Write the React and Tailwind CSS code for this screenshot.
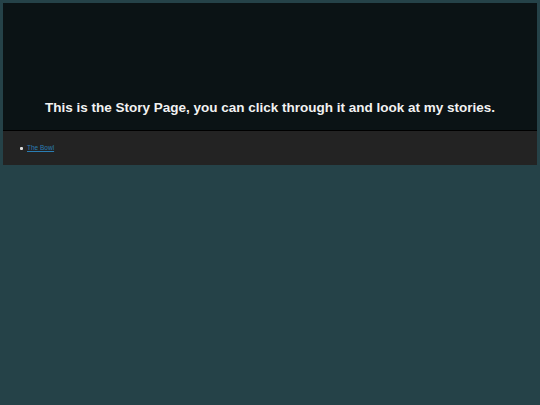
export default function App() {
  return (
    <div className="min-h-[405px] w-full bg-[#254248] p-[3px]" style={{ fontFamily: '"Liberation Sans", Arial, sans-serif' }}>
      <div className="flex h-[127px] items-end justify-center bg-[#0b1315] pb-[16px]">
        <h1 className="text-[13.5px] font-bold leading-none text-[#f2f2f2]">
          This is the Story Page, you can click through it and look at my stories.
        </h1>
      </div>
      <div className="h-px bg-black" />
      <div className="h-[34px] bg-[#232323] pl-[17px] pt-[14px]">
        <ul className="list-none text-[6.5px] leading-none text-[#dddddd]">
          <li className="flex items-center gap-[4px]">
            <span className="block h-[3px] w-[3px] rounded-[1px] bg-[#dddddd]" />
            <a href="#" className="text-[#2a7db3] underline">The Bowl</a>
          </li>
        </ul>
      </div>
    </div>
  );
}
